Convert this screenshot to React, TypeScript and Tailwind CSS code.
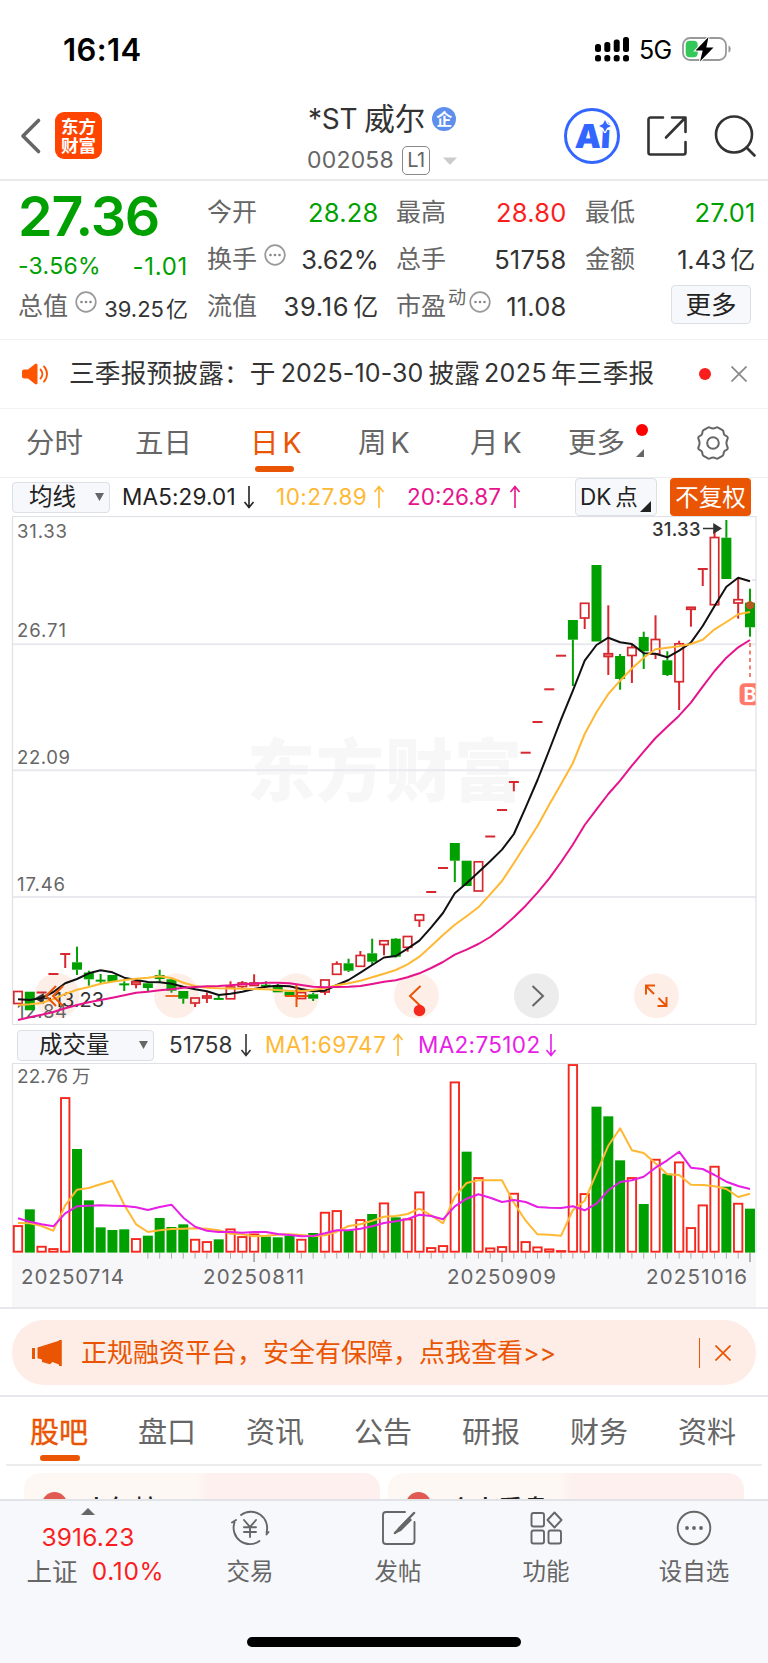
import type { ReactNode } from 'react';

const ORANGE = '#ea5504';
const RED = '#d7282f';
const GREEN = '#00a000';

type Candle = [up: 0 | 1, top: number, bottom: number, high: number, low: number];

const candles: Candle[] = [
  [1, 991.5, 1003.5, 991, 1004], [0, 991.7, 1010.3, 991.7, 1010.3], [1, 992, 993, 992, 993], [1, 973.5, 974.5, 974, 974],
  [1, 953.5, 954.5, 954, 968], [0, 962.3, 969.7, 946.7, 975], [0, 972.5, 979.3, 970.7, 985.7], [0, 980, 981.3, 974, 983.5],
  [0, 975, 982, 975, 982], [0, 983.7, 985, 981.3, 991], [1, 981.8, 984.3, 979, 988.3], [0, 983.3, 988, 982.7, 991],
  [0, 975, 979, 969.7, 982], [0, 979.3, 990.7, 977.7, 992.7], [0, 991, 998.7, 991, 1003.7], [1, 998, 1003, 998, 1007],
  [1, 996, 998, 992.3, 1003], [0, 998.2, 999.6, 995.7, 1000], [1, 987, 998.8, 981.3, 999], [1, 983, 986.5, 981, 988.3],
  [1, 983, 985.5, 974.3, 986], [0, 985, 986.4, 981.3, 987.5], [0, 985, 992.3, 984, 992.3], [0, 991.7, 996, 990, 996],
  [1, 992.6, 998.5, 992, 999], [0, 994.3, 998.7, 993, 1001], [1, 980, 992, 980, 995], [1, 964, 974.3, 961.3, 974],
  [0, 963.3, 970.7, 958.7, 972], [1, 955.5, 966.3, 951, 966], [0, 953.3, 961.7, 938.7, 965], [1, 940.8, 944.5, 940.5, 955.3],
  [0, 938.7, 956.7, 938, 957.5], [1, 936.5, 947.3, 936, 951.7], [1, 914.8, 920.3, 914.5, 927], [1, 891.5, 892.5, 892, 892],
  [1, 867.5, 868.5, 868, 868], [0, 843, 860.7, 843, 882], [0, 860.7, 886, 860.7, 886], [1, 861.8, 891, 861.5, 891],
  [1, 836, 837, 836.5, 836.5], [1, 809.5, 810.5, 810, 810], [1, 781.5, 782.5, 782, 791.3], [1, 752.2, 753.2, 752.7, 752.7],
  [1, 721.5, 722.5, 722, 722], [1, 688.8, 689.8, 689.3, 689.3], [1, 655.2, 656.2, 655.7, 655.7], [0, 620, 639.7, 620, 686],
  [1, 603.3, 618, 603, 629], [0, 565, 641.5, 565, 641.5], [1, 653.7, 656.5, 605.3, 675], [0, 656, 679, 654, 689.7],
  [1, 647.6, 655.5, 645, 683], [0, 637, 651.3, 631.7, 669], [1, 639.5, 654, 615.3, 659], [0, 660.3, 675, 651.3, 676],
  [1, 643.8, 681.7, 640.7, 710], [1, 607.3, 609.3, 607, 626.7], [1, 568.5, 569.5, 569, 586], [1, 537.5, 604.7, 530, 605],
  [0, 537.7, 579, 520, 579], [1, 599.7, 603, 578.3, 618.7], [0, 602.7, 627.3, 588.7, 636.7],
];

const ma5 = [999.3, 1000, 998, 992, 983.3, 979, 973.3, 970.3, 972.3, 977.7, 980, 982, 982.3, 983.7, 986.7, 989.3, 991.3, 995, 993.7, 991.7, 989, 986.7, 985.7, 986.3, 989, 991.3, 990.7, 985, 980, 972.7, 965, 957.5, 956, 948.7, 940.7, 927.3, 913, 893.3, 883.3, 872.3, 861.3, 849.6, 834, 807.3, 780, 750, 719.3, 690.7, 660.7, 645, 637.7, 642.3, 644, 653.3, 653.7, 657.3, 650.7, 642.7, 626, 606, 586.7, 577.7, 581.3];
const ma10 = [1005, 1004.3, 1003, 999, 994, 989.7, 987, 983.7, 981.7, 980, 978.7, 977.7, 976.3, 978, 982.7, 986, 987.7, 988.3, 988.5, 988.7, 989, 989.3, 990, 991, 991, 990, 988.3, 985.3, 983.3, 980.7, 977.3, 973.7, 970, 964.3, 956.7, 946, 935, 924.7, 916.3, 907.3, 894.3, 881, 863, 844.5, 826, 804.5, 784, 763, 734, 712.3, 694, 680.7, 668.5, 657.7, 649.3, 647.7, 646.3, 644, 639.7, 629.3, 622, 614.3, 612];
const ma20 = [1020, 1017.3, 1014.7, 1012, 1008.3, 1005, 1002.3, 1000, 997.7, 995.3, 992.7, 991.7, 990.3, 989.3, 987.7, 987, 986.3, 986, 985.3, 984.3, 983.7, 982.7, 982.7, 983.3, 985, 986.7, 987.3, 987, 986.7, 986, 984, 981.8, 980.3, 977.3, 973.3, 968, 962, 954.7, 949.7, 944, 937, 927.7, 917.3, 905.7, 892.7, 878.3, 862, 844.5, 825, 809.3, 794, 780.7, 765.7, 751.7, 738, 726.7, 715.7, 702.7, 686.7, 671, 657.7, 647.3, 640];

const volTop = [527, 478, 589, 596, 143, 297, 451, 532, 540, 538, 566, 557, 504, 531, 523, 568, 575, 568, 537, 560, 552, 560, 562, 557, 568, 549, 487, 482, 541, 509, 492, 459, 502, 507, 426, 593, 587, 96, 305, 383, 594, 590, 430, 575, 591, 597, 602, 44, 431, 170, 199, 331, 383, 462, 328, 371, 336, 533, 465, 349, 410, 460, 476];
const volMa1 = [519, 520, 528, 542, 466, 419, 414, 403, 392, 465, 523, 546, 541, 537, 536, 535, 536, 541, 551, 553, 559, 557, 554, 553, 555, 559, 556, 545, 528, 523, 512, 500, 498, 492, 476, 496, 520, 440, 399, 391, 391, 391, 458, 512, 553, 554, 557, 480, 452, 370, 287, 235, 301, 309, 340, 373, 375, 404, 405, 409, 417, 441, 431];
const volMa2 = [505, 515, 523, 529, 490, 469, 467, 466, 467, 468, 472, 480, 471, 464, 503, 530, 542, 546, 546, 548, 546, 546, 552, 555, 559, 558, 550, 541, 541, 536, 529, 519, 514, 507, 494, 498, 508, 469, 446, 433, 443, 456, 450, 456, 471, 473, 474, 469, 481, 461, 421, 396, 391, 380, 353, 331, 305, 353, 357, 375, 395, 408, 417];

/** Days whose volume bar is coloured by the change from the previous close, not by open/close. */
const volumeUpOverride: Record<number, boolean> = { 37: true, 47: true, 50: false };

const cx = (i: number) => 18 + i * 11.806;
const points = (ys: number[], f: (y: number) => number = (y) => y) =>
  ys.map((y, i) => `${cx(i).toFixed(1)},${f(y).toFixed(1)}`).join(' ');
const volY = (v: number) => 1050 + v / 3;

function Arrow({ up, className }: { up?: boolean; className: string }) {
  return (
    <svg viewBox="0 0 12 24" className={`h-6 w-3 shrink-0 ${className}`} fill="none" stroke="currentColor" strokeWidth="1.6">
      {up ? <path d="M6 23V2M1.500 7 6 1.500 10.500 7" /> : <path d="M6 1v21M1.500 17 6 22.500 10.500 17" />}
    </svg>
  );
}

function Dots({ className }: { className: string }) {
  return (
    <svg viewBox="0 0 22 22" className={`size-[22px] shrink-0 ${className}`}>
      <circle cx="11" cy="11" r="9.800" fill="none" stroke="#999" strokeWidth="1.700" />
      <g fill="#888"><circle cx="6.500" cy="11" r="1.300" /><circle cx="11" cy="11" r="1.300" /><circle cx="15.500" cy="11" r="1.300" /></g>
    </svg>
  );
}

function StatusBar() {
  return (
    <div className="flex h-[90px] items-center pt-2 pr-[36px] pl-[63px]">
      <span className="text-[31px] font-semibold tracking-[0.400px] text-black">16:14</span>
      <svg viewBox="0 0 34 26" className="ml-auto h-[26px] w-[34px] fill-black">
        <rect x="0" y="8" width="6" height="8" rx="2.500" /><rect x="9.300" y="6" width="6" height="10" rx="2.500" />
        <rect x="18.700" y="3.500" width="6" height="12.500" rx="2.500" /><rect x="28" y="1" width="6" height="15" rx="2.500" />
        <rect x="0" y="19" width="6" height="6.500" rx="2.500" /><rect x="9.300" y="19" width="6" height="6.500" rx="2.500" />
        <rect x="18.700" y="19" width="6" height="6.500" rx="2.500" /><rect x="28" y="19" width="6" height="6.500" rx="2.500" />
      </svg>
      <span className="ml-[10px] w-[32px] pt-[2px] text-[25px] tracking-[-0.800px] text-black">5G</span>
      <svg viewBox="0 0 50 26" className="ml-[11px] h-[26px] w-[50px]">
        <rect x="1" y="2" width="43" height="22" rx="7" fill="none" stroke="#999" strokeWidth="1.800" />
        <path d="M46.500 9.500c3 1 3 6 0 7z" fill="#999" />
        <rect x="3.700" y="4.700" width="12" height="16.600" rx="4" fill="#34c759" />
        <path d="M26.500 1 13.500 14.500h7.200L18 25.500 31.500 11.500h-7.200z" fill="#000" stroke="#fff" strokeWidth="2" paintOrder="stroke" />
      </svg>
    </div>
  );
}

function Header() {
  return (
    <header className="flex h-[91px] items-start border-b-2 border-[#eaeaea]">
      <svg viewBox="0 0 24 38" className="mt-[27px] ml-[19px] h-[38px] w-[24px]" fill="none" stroke="#666" strokeWidth="3.600" strokeLinecap="round" strokeLinejoin="round">
        <path d="M19.500 3.500 4 19l15.500 15.500" />
      </svg>
      <div className="mt-[22px] ml-[12px] flex size-[47px] flex-col items-center justify-center rounded-[9px] bg-[#ff4400] text-[17.500px] leading-[19px] font-bold text-white">
        <span>东方</span><span>财富</span>
      </div>
      <div className="ml-[206px] w-[152px] pt-[13px]">
        <div className="flex h-[32px] items-center">
          <span className="text-[28px] tracking-[-0.300px] text-[#333]">*ST</span>
          <span className="ml-[7px] text-[30.500px] text-[#333]">威尔</span>
          <span className="ml-[7px] flex size-[24px] shrink-0 items-center justify-center rounded-full bg-[#5f8fec] text-[16px] font-bold text-white">企</span>
        </div>
        <div className="mt-[10px] ml-[-1px] flex h-[30px] items-center">
          <span className="w-[88px] text-[23px] tracking-[0.200px] text-[#666]">002058</span>
          <span className="ml-[7px] flex h-[29px] w-[28px] shrink-0 items-center justify-center rounded-[5px] border-[1.500px] border-[#888] text-[20px] tracking-[-0.500px] text-[#666]">L1</span>
          <svg viewBox="0 0 14 8" className="mt-[2px] ml-[13px] h-2 w-[14px] shrink-0"><path d="M0 .5h14L7 8z" fill="#ccc" /></svg>
        </div>
      </div>
      <div className="relative mt-[18px] ml-[104px] flex size-[56px] shrink-0 items-center justify-center rounded-full border-[3px] border-[#3366ff] text-[33px] font-black text-[#3366ff]">
        <span className="-skew-x-3 tracking-[-0.500px]">Ai</span>
        <svg viewBox="0 0 14 14" className="absolute top-[8px] left-[31px] size-[14px]"><path d="M7 1 9 5l4 2-4 2-2 4-2-4-4-2 4-2z" fill="#3366ff" stroke="#fff" strokeWidth="2.500" paintOrder="stroke" /></svg>
      </div>
      <svg viewBox="0 0 42 42" className="mt-[25px] ml-[26px] size-[42px] shrink-0" fill="none" stroke="#333" strokeWidth="2.600" strokeLinecap="round" strokeLinejoin="round">
        <path d="M17 2.500H4.500a2 2 0 0 0-2 2v33a2 2 0 0 0 2 2h33a2 2 0 0 0 2-2V27M20 22.500 39 3M26 2.500h13.500V17" />
      </svg>
      <svg viewBox="0 0 44 44" className="mt-[24px] ml-[26px] size-[44px] shrink-0" fill="none" stroke="#333" strokeWidth="2.600" strokeLinecap="round">
        <circle cx="20" cy="20.500" r="18" /><path d="m32.500 33.500 8 8" />
      </svg>
    </header>
  );
}

function Cell({ label, value, extra, color = 'text-[#333]' }: { label: string; value: ReactNode; extra?: ReactNode; color?: string }) {
  return (
    <div className="flex h-[47px] items-center">
      <span className="text-[25px] text-[#666]">{label}</span>
      {extra}
      <span className={`mr-[-0.500px] ml-auto text-[25.500px] tracking-[0.200px] ${color}`}>{value}</span>
    </div>
  );
}

function Quote() {
  const yi = <span className="ml-[4px] text-[25px]">亿</span>;
  return (
    <section className="flex h-[159px] border-b border-[#f0f0f0] pt-[8px] pl-[18px]">
      <div className="w-[170px]">
        <div className="flex h-[54px] items-center text-[55.500px] font-semibold tracking-[-1.100px] text-[#00a000]">27.36</div>
        <div className="mt-[6px] flex h-[34px] items-center justify-between text-[23px] text-[#00a000]"><span className="tracking-[0.300px]">-3.56%</span><span className="pt-[1px] text-[24px] tracking-[0.700px]">-1.01</span></div>
        <div className="flex h-[47px] items-center text-[25px] text-[#666]">
          总值<Dots className="mt-[-9px] ml-[7px]" />
          <span className="mt-[4px] ml-auto text-[22px] text-[#333]">39.25<span className="ml-[2px]">亿</span></span>
        </div>
      </div>
      <div className="ml-[19px] w-[171px]">
        <Cell label="今开" value="28.28" color="text-[#00a000]" />
        <Cell label="换手" extra={<Dots className="mt-[-9px] ml-[7px]" />} value={<span className="tracking-[-0.200px]">3.62%</span>} />
        <Cell label="流值" value={<><span className="tracking-[0.700px]">39.16</span>{yi}</>} />
      </div>
      <div className="ml-[18px] w-[170px]">
        <Cell label="最高" value="28.80" color="text-[#fa1e1e]" />
        <Cell label="总手" value="51758" />
        <Cell label="市盈" extra={<><span className="mt-[-18px] ml-[2px] text-[18px] text-[#666]">动</span><Dots className="mt-[-9px] ml-[3px]" /></>} value="11.08" />
      </div>
      <div className="ml-[19px] w-[170px]">
        <Cell label="最低" value="27.01" color="text-[#00a000]" />
        <Cell label="金额" value={<><span className="tracking-[-0.200px]">1.43</span>{yi}</>} />
        <div className="mt-[2px] mr-[4px] ml-auto flex h-[39px] w-[80px] items-center justify-center rounded-[4px] border-[1.500px] border-[#dcdfe6] bg-[#f7f8fb] text-[25.500px] text-[#222]">更多</div>
      </div>
    </section>
  );
}

function Announcement() {
  return (
    <section className="flex h-[69px] items-center border-b border-[#f3f3f3] text-[25.700px] text-[#333]">
      <svg viewBox="0 0 28 24" className="ml-[22px] h-6 w-7 shrink-0">
        <path d="M0 9.500a2 2 0 0 1 2-2h4L13 2a1.500 1.500 0 0 1 2.500 1v18a1.500 1.500 0 0 1-2.500 1l-7-5.500H2a2 2 0 0 1-2-2z" fill="#ff5500" />
        <path d="M18.500 7.500c2.500 2.500 2.500 6.500 0 9M22 4.500c4 4 4 11 0 15" fill="none" stroke="#ff5500" strokeWidth="1.800" strokeLinecap="round" />
      </svg>
      <div className="ml-[19px] flex w-[600px] shrink-0 items-center whitespace-nowrap">
        <span className="tracking-[0.150px]">三季报预披露：于</span><span className="ml-[5px] text-[25px] tracking-[0.150px]">2025-10-30</span><span className="ml-[5px]">披露</span>
        <span className="ml-[4px] text-[25px] tracking-[0.400px]">2025</span><span className="ml-[4px] tracking-[0.150px]">年三季报</span>
      </div>
      <div className="ml-[30px] size-[12px] shrink-0 rounded-full bg-[#f81e1e]" />
      <svg viewBox="0 0 16 16" className="ml-[20px] size-4 shrink-0" stroke="#888" strokeWidth="1.700"><path d="m.5.5 15 15m0-15-15 15" /></svg>
    </section>
  );
}

function PeriodTabs() {
  const tab = 'h-full flex items-center shrink-0';
  return (
    <nav className="flex h-[69px] items-center border-b border-[#eee] text-[28.500px] text-[#666]">
      <span className={`${tab} ml-[26px] w-[109px]`}>分时</span>
      <span className={`${tab} w-[115px]`}>五日</span>
      <span className={`${tab} relative w-[108px] text-[#ea5504]`}>日<span className="ml-1">K</span>
        <span className="absolute bottom-[5px] left-[5px] h-[6px] w-[39px] rounded-[3px] bg-[#ea5504]" />
      </span>
      <span className={`${tab} w-[112px]`}>周<span className="ml-1">K</span></span>
      <span className={`${tab} w-[98px]`}>月<span className="ml-1">K</span></span>
      <span className={`${tab} w-[58px]`}>更多</span>
      <svg viewBox="0 0 22 40" className="mt-[-2px] ml-[9px] h-10 w-[22px] shrink-0"><circle cx="7" cy="8" r="6" fill="#f00" /><path d="M9 27v8H1z" fill="#666" /></svg>
      <svg viewBox="0 0 34 34" className="ml-[37px] size-[38px] shrink-0" fill="none" stroke="#666" strokeWidth="1.800" strokeLinejoin="round">
        <path d="M12.500 3.200c1.200-.9 2 .8 4.500.8s3.300-1.700 4.500-.8l4 2.300c1.400.8.6 2.200 1.500 3.800.9 1.500 2.800 1.200 3.200 2.700.3 1.200-1.200 2.500-1.200 5s1.500 3.800 1.200 5c-.4 1.500-2.300 1.200-3.200 2.700-.9 1.600-.1 3-1.500 3.800l-4 2.300c-1.200.9-2-.8-4.500-.8s-3.300 1.700-4.500.8l-4-2.300c-1.400-.8-.6-2.200-1.500-3.800-.9-1.500-2.800-1.200-3.200-2.700-.3-1.200 1.200-2.500 1.200-5S3.500 13.200 3.800 12c.4-1.500 2.300-1.200 3.200-2.700.9-1.600.1-3 1.500-3.800z" />
        <circle cx="17" cy="17" r="5.200" />
      </svg>
    </nav>
  );
}

function Select({ children, className }: { children: ReactNode; className: string }) {
  return (
    <div className={`flex h-[31px] shrink-0 items-center rounded-[4px] border-[1.500px] border-[#dcdfe6] bg-[#f7f8fb] text-[23.500px] text-[#222] ${className}`}>
      {children}
      <svg viewBox="0 0 9 8" className="ml-auto h-2 w-[9px]"><path d="M0 0h9L4.500 8z" fill="#666" /></svg>
    </div>
  );
}

function Indicators() {
  return (
    <div className="flex h-[38px] items-center text-[22.500px] whitespace-nowrap">
      <Select className="ml-[12px] w-[98px] pr-[5px] pl-[16px]">均线</Select>
      <span className="ml-[12px] w-[121px] shrink-0 tracking-[0.150px] text-[#222]">MA5:29.01</span><Arrow className="text-[#222]" />
      <span className="ml-[21px] w-[97px] shrink-0 tracking-[0.500px] text-[#ffb833]">10:27.89</span><Arrow up className="text-[#ffb833]" />
      <span className="ml-[22px] w-[102px] shrink-0 text-[#e6148c]">20:26.87</span><Arrow up className="text-[#e6148c]" />
      <div className="relative ml-auto flex h-[38px] w-[82px] shrink-0 items-center rounded-[4px] border-[1.500px] border-[#dcdfe6] bg-[#f7f8fb] pl-[4px] text-[#222]">
        DK<span className="ml-1">点</span>
        <svg viewBox="0 0 11 11" className="absolute right-[5px] bottom-[3px] size-[11px]"><path d="M11 0v11H0z" fill="#222" /></svg>
      </div>
      <div className="mr-[17px] ml-[13px] flex h-[38px] w-[81px] shrink-0 items-center justify-center rounded-[4px] bg-[#ea5504] pt-px text-[23.500px] text-white">不复权</div>
    </div>
  );
}

function PriceChart() {
  return (
    <svg viewBox="0 516 768 509" className="block h-[509px] w-[768px]">
      <text x="247" y="796" textLength="275" fontSize="68" fontWeight="800" fill="#f7f7f7">东方财富</text>
      <g stroke="#e9eaf0" strokeWidth="2"><path d="M12 644.300h744M12 770.300h744M12 897h744M752 580h4" /></g>
      <rect x="12.500" y="516.500" width="743.500" height="508" fill="none" stroke="#dfe1e6" strokeWidth="1.200" />
      {[57, 176.5, 296.5, 416.5, 656.5].map((x) => <circle key={x} cx={x} cy="995.700" r="22.500" fill="#fdefe8" />)}
      <circle cx="536.500" cy="995.700" r="22.500" fill="#ececec" />
      <path d="M165.500 996h22" stroke={ORANGE} strokeWidth="1.700" />
      <g fontSize="18.500" fill="#666">
        <text x="17" y="537.500" textLength="50">31.33</text><text x="17" y="637" textLength="49">26.71</text>
        <text x="17" y="763.500" textLength="53">22.09</text><text x="17" y="890.500" textLength="48">17.46</text>
        <text x="17" y="1017.500" textLength="50">12.84</text>
      </g>
      {candles.map(([up, top, bottom, high, low], i) => {
        const x = cx(i);
        const c = up ? RED : GREEN;
        return (
          <g key={i} stroke={c} strokeWidth="2">
            {high < top && <path d={`M${x} ${high}V${top}`} />}
            {low > bottom && <path d={`M${x} ${bottom}V${low}`} />}
            {bottom - top < 1.5
              ? <path d={`M${x - 5} ${(top + bottom) / 2}h10`} />
              : up
                ? <rect x={x - 4.2} y={top} width="8.400" height={bottom - top} fill={bottom - top < 3 ? '#e88' : '#fff'} fillOpacity={bottom - top < 3 ? 1 : 0} strokeWidth="1.700" />
                : <rect x={x - 5} y={top} width="10" height={bottom - top} fill={GREEN} stroke="none" />}
          </g>
        );
      })}
      <text x="54" y="1006.500" textLength="50" fontSize="20" fill="#333">13.23</text>
      <path d="M36 998.500h15M43 994.500l-7 4 7 4z" stroke="#333" strokeWidth="1.600" fill="#333" />
      <g fill="none" strokeWidth="2" strokeLinejoin="round">
        <polyline points={points(ma5)} stroke="#111" />
        <polyline points={points(ma10)} stroke="#ffb833" />
        <polyline points={points(ma20)} stroke="#e6148c" />
      </g>
      <g fill="none" stroke={ORANGE} strokeWidth="2">
        <path d="M56 986 46 996l10 10M63 986l-10 10 10 10M285 996h23M296.500 985v22" />
        <path d="M420.500 986 410 996l10.500 10M654 994l-8-8M655 985.500h-9v9M658.500 998l8 8M657.500 1006h9v-9" />
      </g>
      <path d="m532.500 986 10.500 10-10.500 10" fill="none" stroke="#666" strokeWidth="2" />
      <circle cx="419.500" cy="1010.500" r="5.800" fill="#f5281e" />
      <text x="652" y="535.500" textLength="48.500" fontSize="18.500" fontWeight="500" fill="#333">31.33</text>
      <path d="M703 528.500h16M714 524.500l6.500 4-6.500 4z" stroke="#333" strokeWidth="1.600" fill="#333" />
      <circle cx="750" cy="605.300" r="4" fill="#b8581e" />
      <path d="M750 643v37" stroke="#f87060" strokeWidth="1.800" strokeDasharray="4 3.500" />
      <svg x="738" y="680" width="17.500" height="30">
        <rect x="2.500" y="4.300" width="26" height="20" rx="4" fill="#ff7a69" stroke="#ff7a69" strokeWidth="2" />
        <text x="5.500" y="21.500" fontSize="19.500" fontWeight="700" fill="#fff">B</text>
      </svg>
    </svg>
  );
}

function VolumeHeader() {
  return (
    <div className="flex h-[38px] items-center pt-[2px] text-[22.500px] whitespace-nowrap">
      <Select className="ml-[17px] w-[137px] pr-[5px] pl-[21px]">成交量</Select>
      <span className="ml-[15px] w-[71px] shrink-0 tracking-[0.100px] text-[#333]">51758</span><Arrow className="text-[#333]" />
      <span className="ml-[13px] w-[127px] shrink-0 tracking-[0.500px] text-[#ffb833]">MA1:69747</span><Arrow up className="text-[#ffb833]" />
      <span className="ml-[14px] w-[127px] shrink-0 tracking-[0.350px] text-[#e61ee6]">MA2:75102</span><Arrow className="text-[#e61ee6]" />
    </div>
  );
}

function VolumeChart() {
  const base = 1252.3;
  return (
    <svg viewBox="0 1063 768 244" className="block h-[244px] w-[768px]">
      <rect x="12" y="1253" width="744" height="54" fill="#f7f7fa" />
      <path d="M12.500 1253V1063.500H756V1253" fill="none" stroke="#dfe1e6" strokeWidth="1.200" />
      <text x="17" y="1083" textLength="51" fontSize="19" fill="#666">22.76</text>
      <text x="72" y="1083" fontSize="18.500" fill="#666">万</text>
      {volTop.map((v, i) => {
        const x = cx(i);
        const y = volY(v);
        const up = volumeUpOverride[i] ?? candles[i][0] === 1;
        return (
          <g key={i}>
            {up
              ? <rect x={x - 4.2} y={y + 0.4} width="8.400" height={Math.max(base - y - 1, 0.5)} fill="#fff" stroke="#f5281e" strokeWidth="1.900" />
              : <rect x={x - 5} y={y} width="10" height={base - y + 0.3} fill={GREEN} />}
            {i > 10 && <path d={i % 21 === 20 ? `M${x} 1253v9` : `M${x} 1253v5.500`} stroke="#aaa" strokeWidth={i % 21 === 20 ? 1.8 : 1} />}
          </g>
        );
      })}
      <g fill="none" strokeWidth="2" strokeLinejoin="round">
        <polyline points={points(volMa1, volY)} stroke="#ffb833" />
        <polyline points={points(volMa2, volY)} stroke="#e61ee6" />
      </g>
      <g fontSize="20.500" fill="#666">
        <text x="21" y="1283.500" textLength="103">20250714</text><text x="203" y="1283.500" textLength="101">20250811</text>
        <text x="447" y="1283.500" textLength="109">20250909</text><text x="646" y="1283.500" textLength="101">20251016</text>
      </g>
    </svg>
  );
}

function Banner() {
  return (
    <section className="h-[90px] border-y-2 border-[#e7e8ec] px-[12px] pt-[11px]">
      <div className="flex h-[65px] items-center rounded-[32px] bg-[#fdede6] text-[26px] text-[#ea5504]">
        <svg viewBox="0 0 31 26" className="ml-[20px] h-[26px] w-[31px] fill-[#ea5504]">
          <path d="M0 8h3v11H0zM5.500 7.500 27 .8V0h2.800v26H27v-1.500L20.500 22l-2.500 2.200-8-2.200v-2.500l-4.500-1.300z" />
        </svg>
        <span className="ml-[18px] whitespace-nowrap">正规融资平台，安全有保障，点我查看<span className="text-[25px] tracking-[-0.100px]">&gt;&gt;</span></span>
        <div className="ml-auto h-[30px] w-[1.500px] bg-[#ea5504]" />
        <svg viewBox="0 0 16 16" className="mr-[25px] ml-[15px] size-4" stroke={ORANGE} strokeWidth="1.700"><path d="m.5.5 15 15m0-15-15 15" /></svg>
      </div>
    </section>
  );
}

function SectionTabs() {
  const tabs = ['股吧', '盘口', '资讯', '公告', '研报', '财务', '资料'];
  return (
    <nav className="mx-[6px] flex h-[69px] border-b-2 border-[#ececee] pl-[24px]">
      {tabs.map((t, i) => (
        <div key={t} className={`flex w-[108px] shrink-0 flex-col text-[29px] ${i === 0 ? 'text-[#ea5504]' : 'text-[#666]'}`}>
          <span className={`mt-[21px] ${i === 0 ? '[-webkit-text-stroke:0.4px_#ea5504]' : ''}`}>{t}</span>
          {i === 0 && <span className="mt-[8px] ml-[10px] h-[6px] w-[40px] rounded-[3px] bg-[#ea5504]" />}
        </div>
      ))}
    </nav>
  );
}

function Cards() {
  return (
    <div className="flex h-[33px] gap-[8px] overflow-hidden pt-[7px] pl-[24px]">
      {['人气榜', '个人看盘'].map((t) => (
        <div key={t} className="flex h-[90px] w-[356px] shrink-0 items-start rounded-[16px] bg-linear-to-r from-[#fef8f4] from-48% to-[#fdf0ee] to-52% pt-[19px] pl-[18px]">
          <span className="size-[25px] rounded-full bg-[#e05a52]" />
          <span className="ml-[17px] pt-[5px] text-[25px] font-medium text-[#222]">{t}</span>
        </div>
      ))}
    </div>
  );
}

function NavItem({ label, children }: { label: string; children: ReactNode }) {
  return (
    <div className="flex w-[148px] shrink-0 flex-col items-center pt-[7px]">
      <svg viewBox="0 0 40 40" className="size-[40px]" fill="none" stroke="#666" strokeWidth="1.900" strokeLinecap="round" strokeLinejoin="round">{children}</svg>
      <span className="mt-[12px] text-[23.500px] text-[#666]">{label}</span>
    </div>
  );
}

function BottomNav() {
  return (
    <footer className="flex h-[165px] flex-col items-center border-t-2 border-[#e2e3e6] bg-[#f7f8fb]">
      <div className="flex h-[136px] w-full">
        <div className="flex w-[176px] shrink-0 flex-col items-center pt-[7px] text-[24.500px] text-[#fa1e1e]">
          <svg viewBox="0 0 14 7" className="h-[7px] w-[14px]"><path d="M7 0l7 7H0z" fill="#666" /></svg>
          <span className="mt-[10px] tracking-[0.200px]">3916.23</span>
          <div className="mt-[9px] ml-[15px] flex items-center"><span className="text-[25.500px] text-[#666]">上证</span><span className="ml-[14px] tracking-[0.700px]">0.10%</span></div>
        </div>
        <NavItem label="交易">
          <path d="M11 7a16.300 16.300 0 0 1 25.500 17.500M38.500 24l-2 2.500M29.500 33A16.300 16.300 0 0 1 4.500 14.500M2 14.500l4-2.500M14 12l6 7 6-7M14 19.300h12M14 24h12M20 19v10" />
        </NavItem>
        <NavItem label="发帖">
          <path d="M27 4H8a3 3 0 0 0-3 3v26a3 3 0 0 0 3 3h25.500a3 3 0 0 0 3-3V14" />
          <path d="m31 9-11 11-2.500 5.500L23 23l11-11z" fill="#666" stroke="none" /><path d="m17 25 19-20" strokeWidth="2.500" />
        </NavItem>
        <NavItem label="功能">
          <rect x="5.500" y="5" width="12.500" height="13.500" rx="2" /><rect x="5.500" y="22.500" width="12.500" height="13" rx="2" /><rect x="22.500" y="22.500" width="12.500" height="13" rx="2" />
          <path d="m28.500 4.500 7 7.500-7 7.500-7-7.500z" />
        </NavItem>
        <NavItem label="设自选">
          <circle cx="20" cy="20" r="16.300" /><g fill="#666" stroke="none"><circle cx="13" cy="20" r="1.900" /><circle cx="20" cy="20" r="1.900" /><circle cx="27" cy="20" r="1.900" /></g>
        </NavItem>
      </div>
      <div className="h-[10px] w-[274px] rounded-full bg-black" />
    </footer>
  );
}

export default function App() {
  return (
    <div className="h-[1663px] w-[768px] overflow-hidden bg-white font-['Inter','Noto_Sans_CJK_SC',sans-serif] leading-none">
      <StatusBar />
      <Header />
      <Quote />
      <Announcement />
      <PeriodTabs />
      <Indicators />
      <PriceChart />
      <VolumeHeader />
      <VolumeChart />
      <Banner />
      <SectionTabs />
      <Cards />
      <BottomNav />
    </div>
  );
}
